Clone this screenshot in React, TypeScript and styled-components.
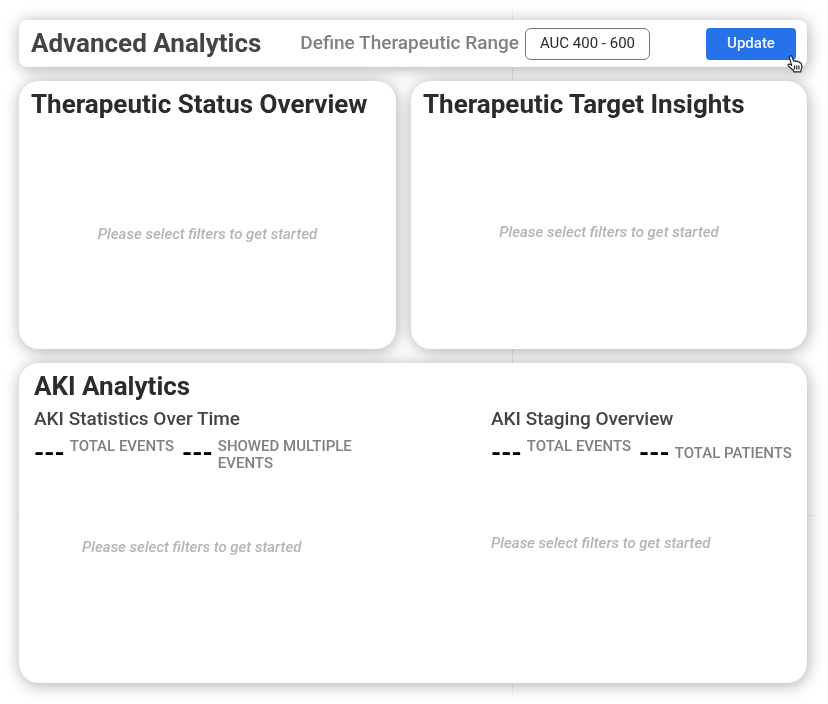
import React from "react";
import styled, { createGlobalStyle } from "styled-components";

const GlobalStyle = createGlobalStyle`
  *, *::before, *::after { box-sizing: border-box; }
  body {
    margin: 0;
    background: #fff;
    font-family: Roboto, "Liberation Sans", sans-serif;
    color: #2b2b2b;
  }
`;

const Page = styled.div`
  min-height: 100vh;
  padding: 20px 21px 20px 19px;
  background:
    linear-gradient(to bottom, transparent 1%, #e6e6e6 3%, #e6e6e6 97%, transparent 99%) calc(62% - 1px) 0 / 1px 100% no-repeat,
    linear-gradient(to right, transparent 1%, #e6e6e6 3%, #e6e6e6 97%, transparent 99%) 0 515px / 100% 1px no-repeat,
    #fff;
`;

const Dashboard = styled.main`
  display: flex;
  flex-direction: column;
  gap: 14px;
  filter: drop-shadow(1px 2px 8px rgba(0, 0, 0, 0.32));
`;

const Toolbar = styled.header`
  display: flex;
  align-items: center;
  min-height: 47px;
  padding: 0 11px 0 12px;
  border-radius: 8px;
  background: #fff;
`;

const PageTitle = styled.h1`
  margin: 0 39px 0 0;
  padding-bottom: 2px;
  color: #444;
  font-size: 26px;
  font-weight: 700;
  line-height: 30px;
  white-space: nowrap;
`;

const RangeLabel = styled.label`
  margin-right: 6px;
  padding-bottom: 2px;
  color: #808080;
  font-size: 19px;
  font-weight: 500;
  line-height: 24px;
  white-space: nowrap;
`;

const RangeInput = styled.input`
  width: 125px;
  height: 32px;
  padding: 0 8px 2px;
  border: 1px solid #777;
  border-radius: 6px;
  background: #fff;
  color: #2b2b2b;
  font-family: inherit;
  font-size: 15px;
  text-align: center;
`;

const UpdateArea = styled.div`
  position: relative;
  margin-left: auto;
`;

const UpdateButton = styled.button`
  display: block;
  width: 90px;
  height: 32px;
  padding: 0 0 2px;
  border: 0;
  border-radius: 4px;
  background: #2672e8;
  color: #f2f7ff;
  font-family: inherit;
  font-size: 15px;
  font-weight: 500;
  cursor: pointer;
`;

const Pointer = styled.svg`
  position: absolute;
  right: -7px;
  bottom: -13px;
  width: 16px;
  height: 18px;
  pointer-events: none;
`;

const Overview = styled.div`
  display: grid;
  grid-template-columns: 377fr 396fr;
  gap: 15px;
`;

const Card = styled.section<{ $tall?: boolean }>`
  display: flex;
  flex-direction: column;
  min-height: ${(p) => (p.$tall ? "320px" : "268px")};
  padding: ${(p) => (p.$tall ? "8px 15px" : "8px 12px")};
  border-radius: 20px;
  background: #fff;
`;

const CardTitle = styled.h2`
  margin: 0;
  font-size: 26px;
  font-weight: 700;
  line-height: 30px;
  white-space: nowrap;
`;

const CenteredBody = styled.div<{ $low?: boolean }>`
  display: flex;
  flex: 1;
  align-items: center;
  justify-content: center;
  padding-top: ${(p) => (p.$low ? "8px" : "4px")};
`;

const Placeholder = styled.p`
  margin: 0;
  color: #b4b4b4;
  font-size: 15px;
  font-style: italic;
  font-weight: 500;
  line-height: 18px;
`;

const AkiColumns = styled.div`
  display: grid;
  grid-template-columns: 457fr 301fr;
`;

const AkiColumn = styled.div`
  display: flex;
  flex-direction: column;
  min-width: 0;
`;

const SubTitle = styled.h3`
  margin: 6px 0 7px;
  color: #444;
  font-size: 19px;
  font-weight: 500;
  line-height: 24px;
`;

const Stats = styled.dl`
  display: flex;
  align-items: flex-start;
  gap: 8px;
  min-height: 34px;
  margin: 0;
`;

const Stat = styled.div<{ $centered?: boolean }>`
  display: flex;
  flex-direction: row-reverse;
  align-items: ${(p) => (p.$centered ? "center" : "flex-start")};
  gap: 5px;
`;

const StatValue = styled.dd`
  margin: 0;
  color: #000;
  font-size: 26px;
  font-weight: 700;
  line-height: 30px;
  white-space: nowrap;
`;

const StatLabel = styled.dt<{ $wrap?: boolean }>`
  width: ${(p) => (p.$wrap ? "140px" : "auto")};
  color: #808080;
  font-size: 15px;
  font-weight: 500;
  line-height: 17px;
  white-space: ${(p) => (p.$wrap ? "normal" : "nowrap")};
`;

const ColumnBody = styled.div<{ $indented?: boolean }>`
  padding: ${(p) => (p.$indented ? "66px 0 0 48px" : "62px 0 0")};
`;

const EMPTY = "Please select filters to get started";

type StatData = { label: string; wrap?: boolean; centered?: boolean };

function StatRow({ items }: { items: StatData[] }) {
  return (
    <Stats>
      {items.map((item) => (
        <Stat key={item.label} $centered={item.centered}>
          <StatLabel $wrap={item.wrap}>{item.label}</StatLabel>
          <StatValue>---</StatValue>
        </Stat>
      ))}
    </Stats>
  );
}

function HandPointer() {
  return (
    <Pointer viewBox="0 0 16 18" aria-hidden="true">
      <path
        d="M3.200 1c.8-.3 1.500.1 1.800.9l1.700 4.300c.5-.7 1.600-.6 2 .2.600-.6 1.600-.4 2 .4.800-.4 1.700 0 2 .9.800-.2 1.400.3 1.600 1.100l.5 2.300c.2 1.400-.1 2.500-.7 3.600l-.3 2.200H7l-.7-1.700-4.800-4.100c-.6-.7-.5-1.400 0-1.800.6-.4 1.200-.2 1.800.2l1.300.9L2.400 2.300c-.2-.6.1-1.100.8-1.300Z"
        fill="#fff"
        stroke="#222"
        strokeWidth="1.2"
        strokeLinejoin="round"
      />
      <path d="M7.500 10.500v4M9.700 10.500v4M11.900 10.500v4" stroke="#222" strokeWidth="1.2" />
    </Pointer>
  );
}

export default function App() {
  return (
    <>
      <GlobalStyle />
      <Page>
        <Dashboard>
          <Toolbar>
            <PageTitle>Advanced Analytics</PageTitle>
            <RangeLabel htmlFor="range">Define Therapeutic Range</RangeLabel>
            <RangeInput id="range" defaultValue="AUC 400 - 600" />
            <UpdateArea>
              <UpdateButton type="button">Update</UpdateButton>
              <HandPointer />
            </UpdateArea>
          </Toolbar>
          <Overview>
            <Card>
              <CardTitle>Therapeutic Status Overview</CardTitle>
              <CenteredBody $low>
                <Placeholder>{EMPTY}</Placeholder>
              </CenteredBody>
            </Card>
            <Card>
              <CardTitle>Therapeutic Target Insights</CardTitle>
              <CenteredBody>
                <Placeholder>{EMPTY}</Placeholder>
              </CenteredBody>
            </Card>
          </Overview>
          <Card $tall>
            <CardTitle>AKI Analytics</CardTitle>
            <AkiColumns>
              <AkiColumn>
                <SubTitle>AKI Statistics Over Time</SubTitle>
                <StatRow items={[{ label: "TOTAL EVENTS" }, { label: "SHOWED MULTIPLE EVENTS", wrap: true }]} />
                <ColumnBody $indented>
                  <Placeholder>{EMPTY}</Placeholder>
                </ColumnBody>
              </AkiColumn>
              <AkiColumn>
                <SubTitle>AKI Staging Overview</SubTitle>
                <StatRow items={[{ label: "TOTAL EVENTS" }, { label: "TOTAL PATIENTS", centered: true }]} />
                <ColumnBody>
                  <Placeholder>{EMPTY}</Placeholder>
                </ColumnBody>
              </AkiColumn>
            </AkiColumns>
          </Card>
        </Dashboard>
      </Page>
    </>
  );
}
